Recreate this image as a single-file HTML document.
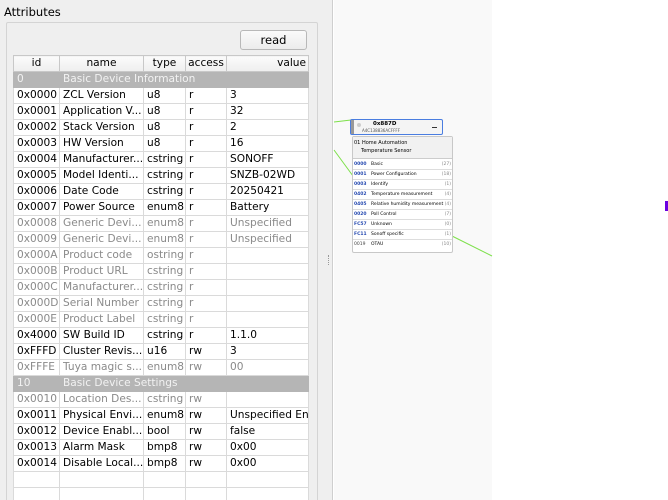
<!DOCTYPE html>
<html><head><meta charset="utf-8"><style>
*{box-sizing:border-box;margin:0;padding:0}
html,body{width:668px;height:500px;overflow:hidden}
body{position:relative;background:#fff;font-family:"DejaVu Sans","Liberation Sans",sans-serif;font-size:11px;color:#000}
.panel{position:absolute;left:0;top:0;width:333px;height:500px;background:#efefef;border-right:1px solid #cfcfcf;overflow:hidden}
.canvas{position:absolute;left:334px;top:0;width:158px;height:500px;background:#f9f9f9}
.title{position:absolute;left:4px;top:5px;font-size:11.5px}
.group{position:absolute;left:6px;top:22px;width:312px;height:490px;border:1px solid #d4d4d4;border-radius:2px}
.btn{position:absolute;left:240px;top:30px;width:67px;height:20px;border:1px solid #b8b8b8;border-radius:3px;background:linear-gradient(#fafafa,#ececec);text-align:center;line-height:18px;font-size:11.5px}
table{position:absolute;left:13px;top:55px;width:295px;border-collapse:collapse;table-layout:fixed;background:#fff;border:1px solid #bdbdbd}
td,th{height:16px;padding:0 0 0 3px;border:1px solid #dadada;white-space:nowrap;overflow:hidden;text-overflow:clip;font-weight:normal;font-size:10.6px;line-height:15px;text-align:left}
th{background:linear-gradient(#fbfbfb,#eee);text-align:center;border-color:#c8c8c8;padding:0}
th.v{text-align:right;padding-right:2px}
tr.g td{background:#b5b5b5;color:#f2f2f2;border-color:#b5b5b5}
tr.d td{color:#8a8a8a}
.node{position:absolute;font-size:5px}
.r{border-bottom:1px solid #ddd;display:flex;height:10px;line-height:9px}
.r b{color:#2448b0;width:18px;padding-left:1px}
.r i{font-style:normal;color:#888;padding-right:1px}
.r span{flex:1;overflow:hidden;white-space:nowrap}
</style></head><body>
<div class="panel">
<div class="title">Attributes</div>
<div class="group"></div>
<div class="btn">read</div>
<table>
<colgroup><col style="width:46px"><col style="width:84px"><col style="width:42px"><col style="width:41px"><col style="width:82px"></colgroup>
<tr><th>id</th><th>name</th><th>type</th><th>access</th><th class="v">value</th></tr>
<tr class="g"><td>0</td><td colspan="4">Basic Device Information</td></tr>
<tr><td>0x0000</td><td>ZCL Version</td><td>u8</td><td>r</td><td>3</td></tr>
<tr><td>0x0001</td><td>Application V...</td><td>u8</td><td>r</td><td>32</td></tr>
<tr><td>0x0002</td><td>Stack Version</td><td>u8</td><td>r</td><td>2</td></tr>
<tr><td>0x0003</td><td>HW Version</td><td>u8</td><td>r</td><td>16</td></tr>
<tr><td>0x0004</td><td>Manufacturer...</td><td>cstring</td><td>r</td><td>SONOFF</td></tr>
<tr><td>0x0005</td><td>Model Identi...</td><td>cstring</td><td>r</td><td>SNZB-02WD</td></tr>
<tr><td>0x0006</td><td>Date Code</td><td>cstring</td><td>r</td><td>20250421</td></tr>
<tr><td>0x0007</td><td>Power Source</td><td>enum8</td><td>r</td><td>Battery</td></tr>
<tr class="d"><td>0x0008</td><td>Generic Devi...</td><td>enum8</td><td>r</td><td>Unspecified</td></tr>
<tr class="d"><td>0x0009</td><td>Generic Devi...</td><td>enum8</td><td>r</td><td>Unspecified</td></tr>
<tr class="d"><td>0x000A</td><td>Product code</td><td>ostring</td><td>r</td><td></td></tr>
<tr class="d"><td>0x000B</td><td>Product URL</td><td>cstring</td><td>r</td><td></td></tr>
<tr class="d"><td>0x000C</td><td>Manufacturer...</td><td>cstring</td><td>r</td><td></td></tr>
<tr class="d"><td>0x000D</td><td>Serial Number</td><td>cstring</td><td>r</td><td></td></tr>
<tr class="d"><td>0x000E</td><td>Product Label</td><td>cstring</td><td>r</td><td></td></tr>
<tr><td>0x4000</td><td>SW Build ID</td><td>cstring</td><td>r</td><td>1.1.0</td></tr>
<tr><td>0xFFFD</td><td>Cluster Revis...</td><td>u16</td><td>rw</td><td>3</td></tr>
<tr class="d"><td>0xFFFE</td><td>Tuya magic s...</td><td>enum8</td><td>rw</td><td>00</td></tr>
<tr class="g"><td>10</td><td colspan="4">Basic Device Settings</td></tr>
<tr class="d"><td>0x0010</td><td>Location Des...</td><td>cstring</td><td>rw</td><td></td></tr>
<tr><td>0x0011</td><td>Physical Envi...</td><td>enum8</td><td>rw</td><td>Unspecified Env</td></tr>
<tr><td>0x0012</td><td>Device Enabl...</td><td>bool</td><td>rw</td><td>false</td></tr>
<tr><td>0x0013</td><td>Alarm Mask</td><td>bmp8</td><td>rw</td><td>0x00</td></tr>
<tr><td>0x0014</td><td>Disable Local...</td><td>bmp8</td><td>rw</td><td>0x00</td></tr>
<tr><td>&nbsp;</td><td></td><td></td><td></td><td></td></tr>
<tr><td>&nbsp;</td><td></td><td></td><td></td><td></td></tr>
</table>
<div style="position:absolute;left:328px;top:255px;width:2px;height:10px;border-left:1px dotted #999"></div>
</div>
<div class="canvas"></div>
<svg style="position:absolute;left:0;top:0" width="668" height="500">
<line x1="334" y1="122" x2="351" y2="120" stroke="#7de04a" stroke-width="1"/>
<line x1="334" y1="150" x2="353" y2="176" stroke="#7de04a" stroke-width="1"/>
<line x1="452" y1="236" x2="492" y2="256" stroke="#7de04a" stroke-width="1"/>
<rect x="665" y="201" width="3" height="10" fill="#6a00e0"/>
</svg>
<div style="position:absolute;left:350px;top:119px;width:93px;height:16px;border:1px solid #4a7de0;border-radius:2px;background:#f4f4f4"></div>
<div style="position:absolute;left:351px;top:120px;width:3px;height:14px;background:#999"></div>
<div style="position:absolute;left:357px;top:123px;width:4px;height:4px;border-radius:2px;background:#ccc"></div>
<div class="node" style="left:373px;top:121px;font-weight:bold;font-size:5.5px">0x887D</div>
<div class="node" style="left:362px;top:128px;font-size:4px;color:#555">A4C138836ACFFFF</div>
<div style="position:absolute;left:432px;top:127px;width:5px;height:1px;background:#333"></div>
<div style="position:absolute;left:352px;top:136px;width:101px;height:117px;border:1px solid #c8c8c8;background:#fff;border-radius:2px"></div>
<div style="position:absolute;left:353px;top:137px;width:99px;height:22px;background:#f1f1f1;border-bottom:1px solid #ccc"></div>
<div class="node" style="left:354px;top:140px">01 Home Automation</div>
<div class="node" style="left:361px;top:148px">Temperature Sensor</div>
<div style="position:absolute;left:353px;top:160px;width:99px;font-size:4.5px">
<div class="r"><b>0000</b><span>Basic</span><i>(27)</i></div>
<div class="r"><b>0001</b><span>Power Configuration</span><i>(18)</i></div>
<div class="r"><b>0003</b><span>Identify</span><i>(1)</i></div>
<div class="r"><b>0402</b><span>Temperature measurement</span><i>(4)</i></div>
<div class="r"><b>0405</b><span>Relative humidity measurement</span><i>(4)</i></div>
<div class="r"><b>0020</b><span>Poll Control</span><i>(7)</i></div>
<div class="r"><b>FC57</b><span>Unknown</span><i>(0)</i></div>
<div class="r"><b>FC11</b><span>Sonoff specific</span><i>(1)</i></div>
<div class="r" style="border:0"><b style="color:#444;font-weight:normal">0019</b><span>OTAU</span><i>(10)</i></div>
</div>
</body></html>
